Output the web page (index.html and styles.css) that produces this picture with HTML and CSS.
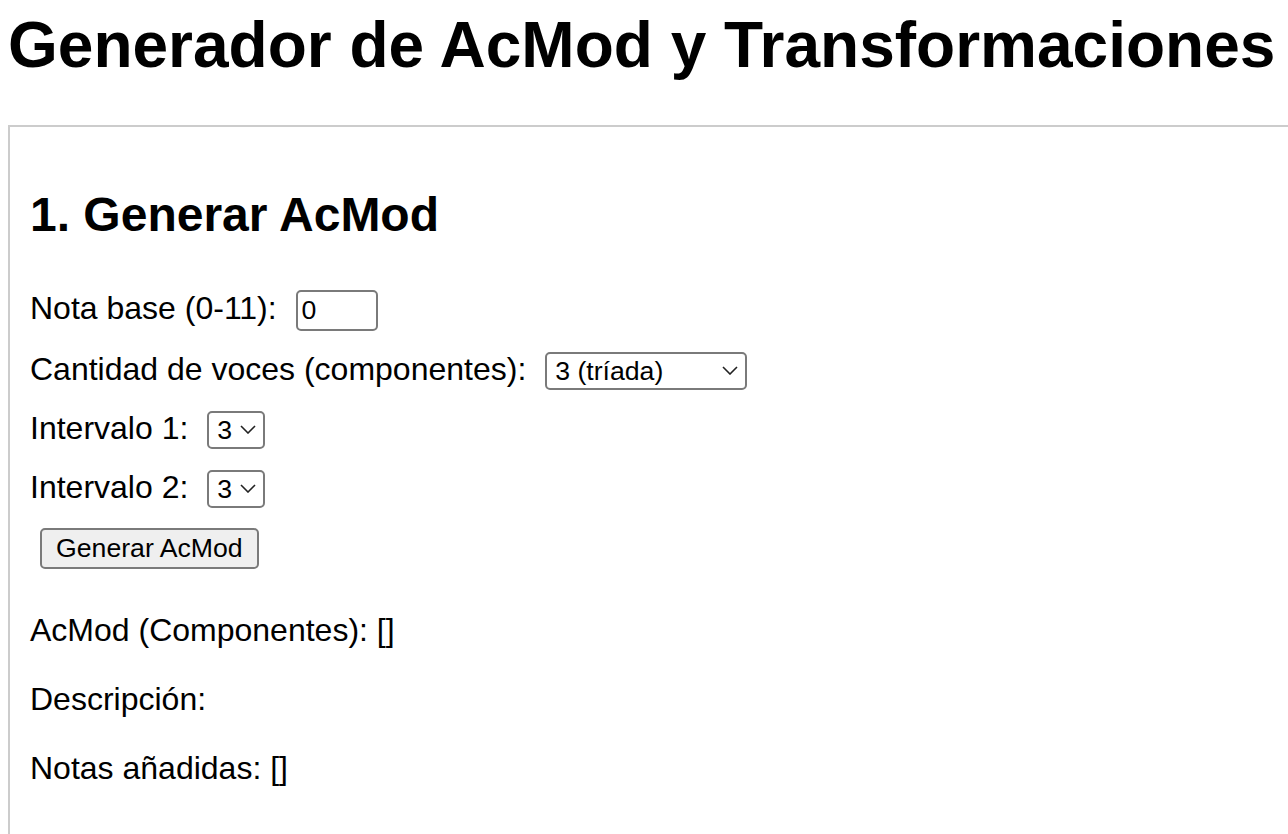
FILE: index.html
```html
<!DOCTYPE html>
<html lang="es">
<head>
<meta charset="utf-8">
<title>Generador de AcMod y Transformaciones</title>
<link rel="stylesheet" href="styles.css">
</head>
<body>
<h1 class="title">Generador de AcMod y Transformaciones</h1>
<section class="panel">
  <h2 class="panel-title">1. Generar AcMod</h2>
  <div class="controls">
    <div class="row">
      <label class="label" for="base">Nota base (0-11):</label>
      <input class="field" id="base" type="text" value="0">
    </div>
    <div class="row">
      <label class="label" for="voces">Cantidad de voces (componentes):</label>
      <span class="select-wrap">
        <select class="select select-voices" id="voces">
          <option>3 (tríada)</option>
          <option>4 (cuatríada)</option>
        </select>
        <svg class="chevron" width="16" height="9" viewBox="0 0 16 9"><path d="M1 1 L8 8 L15 1" fill="none" stroke="#222" stroke-width="1.6"/></svg>
      </span>
    </div>
    <div class="row">
      <label class="label" for="int1">Intervalo 1:</label>
      <span class="select-wrap">
        <select class="select select-int" id="int1">
          <option>3</option>
          <option>4</option>
        </select>
        <svg class="chevron" width="16" height="9" viewBox="0 0 16 9"><path d="M1 1 L8 8 L15 1" fill="none" stroke="#222" stroke-width="1.6"/></svg>
      </span>
    </div>
    <div class="row">
      <label class="label" for="int2">Intervalo 2:</label>
      <span class="select-wrap">
        <select class="select select-int" id="int2">
          <option>3</option>
          <option>4</option>
        </select>
        <svg class="chevron" width="16" height="9" viewBox="0 0 16 9"><path d="M1 1 L8 8 L15 1" fill="none" stroke="#222" stroke-width="1.6"/></svg>
      </span>
    </div>
    <div class="row">
      <button class="btn" type="button">Generar AcMod</button>
    </div>
  </div>
  <p class="result">AcMod (Componentes): []</p>
  <p class="result">Descripción: </p>
  <p class="result">Notas añadidas: []</p>
</section>
</body>
</html>
```
FILE: styles.css
```css
html {
  overflow: hidden;
}

body {
  margin: 8px 0 8px 8px;
  font-family: "Liberation Sans", Arial, Helvetica, sans-serif;
  font-size: 32px;
  color: #000;
  background: #fff;
}

.title {
  font-size: 64px;
  font-weight: bold;
  margin: 0 0 43px;
  white-space: nowrap;
}

.panel {
  border: 2px solid #cccccc;
  border-right: none;
  padding: 20px 20px 60px;
}

.panel-title {
  font-size: 48px;
  font-weight: bold;
  margin: 40px 0;
}

.controls {
  display: flex;
  flex-direction: column;
  gap: 20px;
  padding: 8px 0 11px;
}

.row {
  display: block;
}

.label {
  margin-right: 10px;
}

.field {
  font-family: "Liberation Sans", Arial, sans-serif;
  font-size: 26.67px;
  width: 82px;
  box-sizing: border-box;
  padding: 3px 4px;
  border: 2px solid #7a7a7a;
  border-radius: 5px;
  color: #000;
  background: #fff;
}

.select-wrap {
  position: relative;
  display: inline-block;
}

.select {
  -webkit-appearance: none;
  appearance: none;
  font-family: "Liberation Sans", Arial, sans-serif;
  font-size: 26.67px;
  box-sizing: border-box;
  padding: 2px 8px;
  border: 2px solid #7a7a7a;
  border-radius: 5px;
  background: #fff;
  color: #000;
}

.select-voices {
  width: 202px;
}

.select-int {
  width: 58px;
}

.chevron {
  position: absolute;
  right: 9px;
  top: 50%;
  margin-top: -5px;
  pointer-events: none;
}

.btn {
  font-family: "Liberation Sans", Arial, sans-serif;
  font-size: 26.67px;
  margin-left: 10px;
  padding: 3px 14px;
  border: 2px solid #7a7a7a;
  border-radius: 5px;
  background: #efefef;
  color: #000;
}

.result {
  margin: 32px 0;
}
```
